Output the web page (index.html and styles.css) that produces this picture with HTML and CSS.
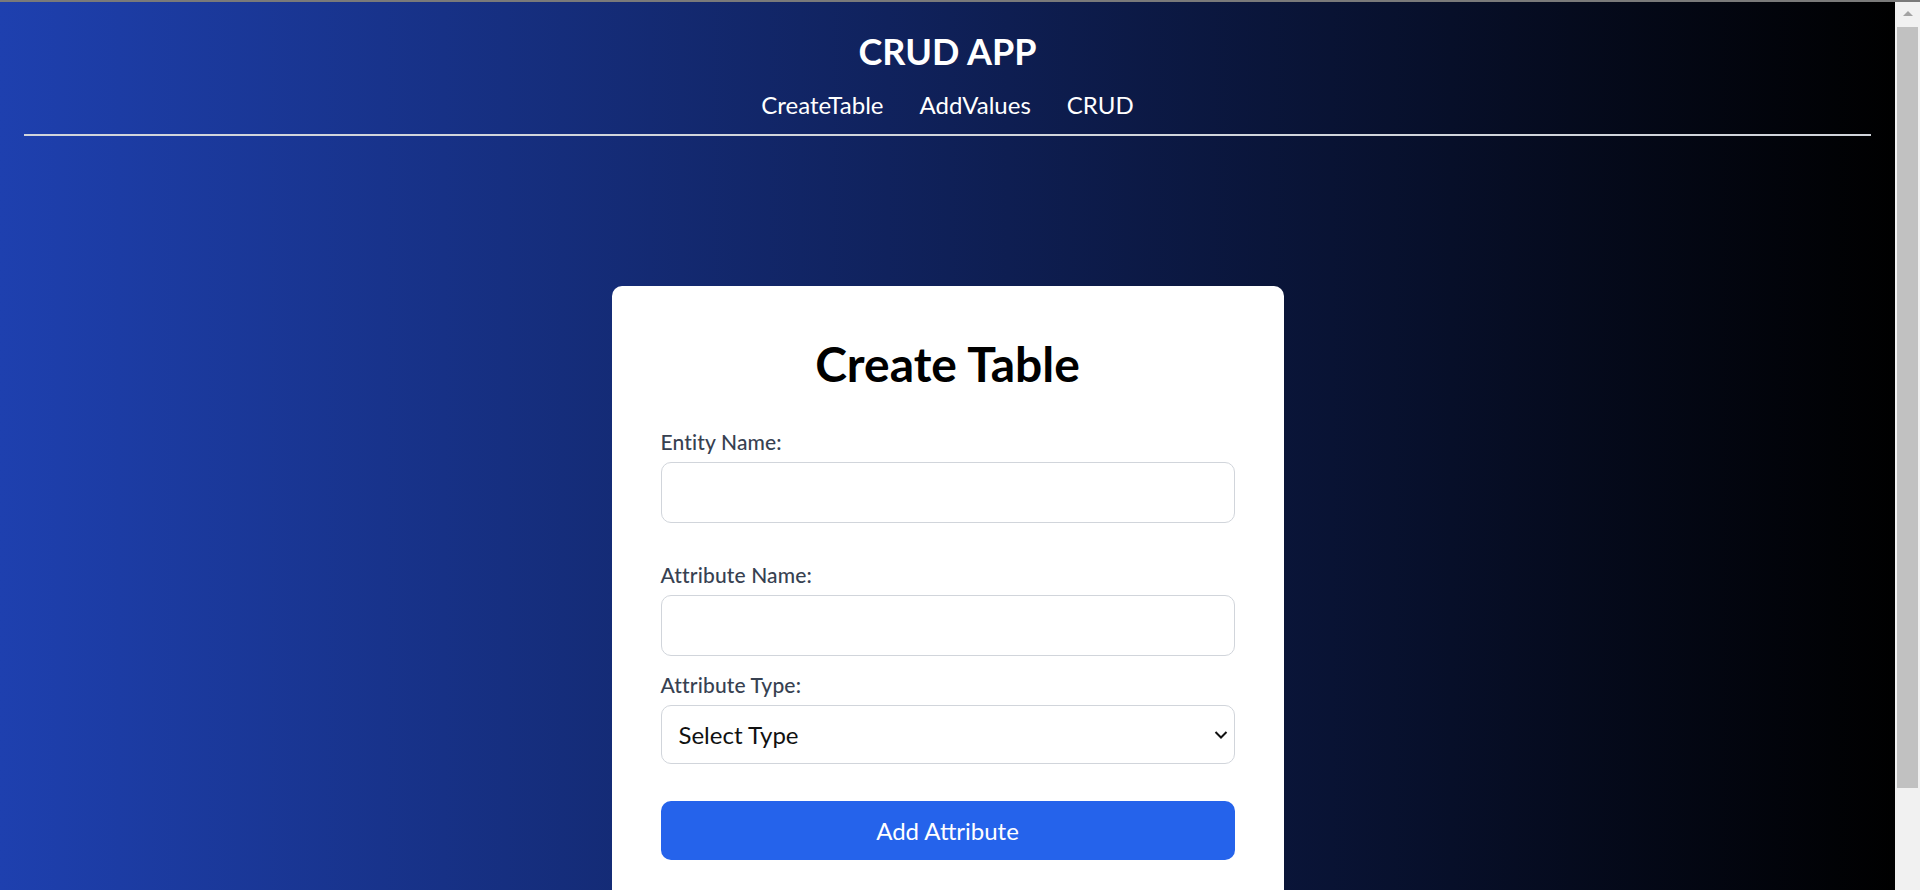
FILE: index.html
```html
<!DOCTYPE html>
<html lang="en">
<head>
<meta charset="utf-8">
<title>CRUD APP</title>
<link rel="stylesheet" href="styles.css">
</head>
<body>
<div class="topbar"></div>
<div class="frame">
  <div class="page">
    <header class="header">
      <h1 class="brand">CRUD APP</h1>
      <nav class="nav">
        <a href="#">CreateTable</a>
        <a href="#">AddValues</a>
        <a href="#">CRUD</a>
      </nav>
      <hr class="rule">
    </header>
    <main class="main">
      <form class="card">
        <h2 class="title">Create Table</h2>
        <div class="field field-entity">
          <label class="label" for="entity">Entity Name:</label>
          <input class="input" id="entity" type="text">
        </div>
        <div class="field field-name">
          <label class="label" for="attr">Attribute Name:</label>
          <input class="input" id="attr" type="text">
        </div>
        <div class="field field-type">
          <label class="label" for="type">Attribute Type:</label>
          <div class="select-wrap">
            <select class="input select" id="type">
              <option>Select Type</option>
              <option>String</option>
              <option>Number</option>
            </select>
            <svg class="chev" width="14" height="9" viewBox="0 0 14 9"><path d="M1.5 1.5 L7 7 L12.5 1.5" fill="none" stroke="#111" stroke-width="2"/></svg>
          </div>
        </div>
        <button class="btn" type="button">Add Attribute</button>
      </form>
    </main>
  </div>
  <div class="scrollbar">
    <div class="sb-up"></div>
    <div class="sb-thumb"></div>
  </div>
</div>
</body>
</html>
```
FILE: styles.css
```css
* { box-sizing: border-box; }
html, body { margin: 0; height: 890px; overflow: hidden; }
body { font-family: Lato, "Open Sans", sans-serif; background: #f1f1f1; }

.topbar { height: 2px; background: #7a7a7a; }
.frame { display: flex; height: 888px; }
.page {
  flex: 1;
  min-width: 0;
  overflow: hidden;
  background: linear-gradient(to right, #1e40af, #000);
}

.header { padding-top: 27px; text-align: center; color: #fff; }
.brand { margin: 0; font-size: 36px; font-weight: 700; line-height: 44px; }
.nav { display: flex; justify-content: center; gap: 36px; margin-top: 16px; }
.nav a { color: #fff; text-decoration: none; font-size: 24px; line-height: 32px; }
.rule { height: 2px; background: #d1d5db; margin: 13px 24px 0; border: 0; }

.main { display: flex; justify-content: center; padding-top: 150px; }
.card {
  width: 672px;
  background: #fff;
  border-radius: 10px;
  padding: 49px;
}
.title {
  margin: 0 0 35px;
  text-align: center;
  font-size: 48px;
  line-height: 58px;
  font-weight: 700;
  color: #000;
}
.field { display: flex; flex-direction: column; }
.field-entity { margin-bottom: 38px; }
.field-name { margin-bottom: 15px; }
.field-type { margin-bottom: 37px; }
.label {
  font-size: 21px;
  line-height: 28px;
  font-weight: 500;
  letter-spacing: 0.15px;
  color: #374151;
  margin-bottom: 6px;
}
.input {
  display: block;
  width: 100%;
  height: 61px;
  border: 1px solid #d1d5db;
  border-radius: 10px;
  background: #fff;
  font-family: inherit;
  font-size: 24px;
  color: #111;
  padding: 0 17px;
  outline: none;
}
.select-wrap { position: relative; }
.select { appearance: none; -webkit-appearance: none; height: 59px; }
.chev {
  position: absolute;
  right: 7px;
  top: 50%;
  transform: translateY(-50%);
  pointer-events: none;
}
.btn {
  display: block;
  width: 100%;
  height: 59px;
  border: 0;
  border-radius: 10px;
  background: #2563eb;
  color: #fff;
  font-family: inherit;
  font-size: 24px;
}

.scrollbar {
  width: 25px;
  background: #f1f1f1;
  display: flex;
  flex-direction: column;
  align-items: center;
}
.sb-up {
  width: 0;
  height: 0;
  border-left: 5px solid transparent;
  border-right: 5px solid transparent;
  border-bottom: 5px solid #a3a3a3;
  margin-top: 9px;
}
.sb-thumb { width: 21px; height: 761px; background: #c1c1c1; margin-top: 11px; }
```
